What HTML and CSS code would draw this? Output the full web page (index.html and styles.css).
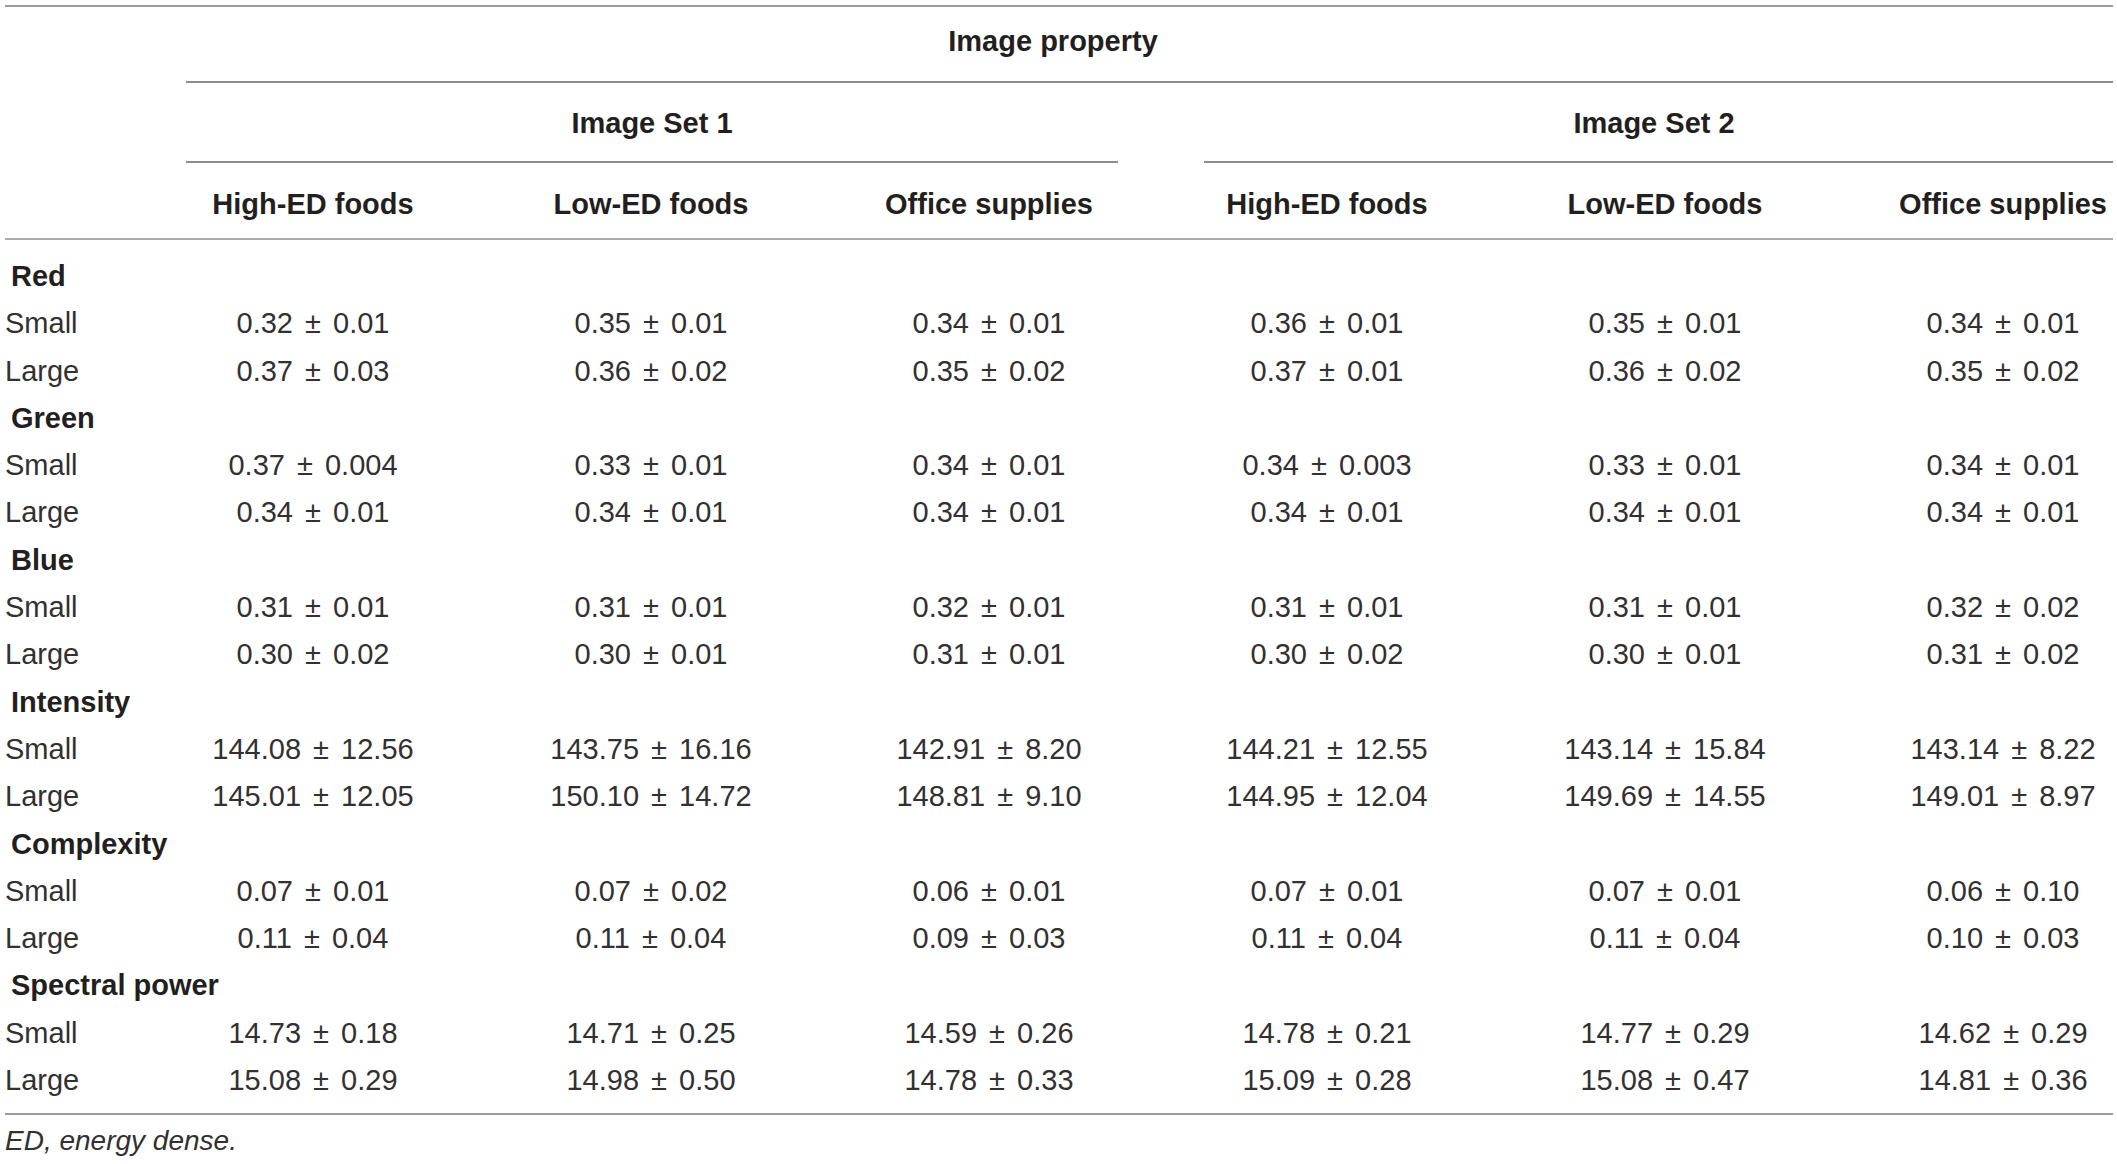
FILE: index.html
```html
<!DOCTYPE html>
<html lang="en">
<head>
<meta charset="UTF-8">
<meta name="viewport" content="width=device-width, initial-scale=1.0">
<title>Image property by image set</title>
<link rel="stylesheet" href="styles.css">
</head>
<body>
<div class="wrap">
<table class="props">
    <colgroup>
        <col class="col-label">
        <col class="col-val"><col class="col-val"><col class="col-val">
        <col class="col-val"><col class="col-val"><col class="col-val">
    </colgroup>
    <thead>
        <tr>
            <th class="stub" rowspan="3"></th>
            <th class="group" colspan="6"><div class="rule prop-title">Image property</div></th>
        </tr>
        <tr>
            <th class="group" colspan="3"><div class="rule set-one">Image Set 1</div></th>
            <th class="group" colspan="3"><div class="rule set-two">Image Set 2</div></th>
        </tr>
        <tr class="head-cols">
            <th>High-ED foods</th>
            <th>Low-ED foods</th>
            <th>Office supplies</th>
            <th>High-ED foods</th>
            <th>Low-ED foods</th>
            <th>Office supplies</th>
        </tr>
    </thead>
    <tbody>
        <tr><td class="cat" colspan="7">Red</td></tr>
        <tr><td class="lab">Small</td><td>0.32 ± 0.01</td><td>0.35 ± 0.01</td><td>0.34 ± 0.01</td><td>0.36 ± 0.01</td><td>0.35 ± 0.01</td><td>0.34 ± 0.01</td></tr>
        <tr><td class="lab">Large</td><td>0.37 ± 0.03</td><td>0.36 ± 0.02</td><td>0.35 ± 0.02</td><td>0.37 ± 0.01</td><td>0.36 ± 0.02</td><td>0.35 ± 0.02</td></tr>
        <tr><td class="cat" colspan="7">Green</td></tr>
        <tr><td class="lab">Small</td><td>0.37 ± 0.004</td><td>0.33 ± 0.01</td><td>0.34 ± 0.01</td><td>0.34 ± 0.003</td><td>0.33 ± 0.01</td><td>0.34 ± 0.01</td></tr>
        <tr><td class="lab">Large</td><td>0.34 ± 0.01</td><td>0.34 ± 0.01</td><td>0.34 ± 0.01</td><td>0.34 ± 0.01</td><td>0.34 ± 0.01</td><td>0.34 ± 0.01</td></tr>
        <tr><td class="cat" colspan="7">Blue</td></tr>
        <tr><td class="lab">Small</td><td>0.31 ± 0.01</td><td>0.31 ± 0.01</td><td>0.32 ± 0.01</td><td>0.31 ± 0.01</td><td>0.31 ± 0.01</td><td>0.32 ± 0.02</td></tr>
        <tr><td class="lab">Large</td><td>0.30 ± 0.02</td><td>0.30 ± 0.01</td><td>0.31 ± 0.01</td><td>0.30 ± 0.02</td><td>0.30 ± 0.01</td><td>0.31 ± 0.02</td></tr>
        <tr><td class="cat" colspan="7">Intensity</td></tr>
        <tr><td class="lab">Small</td><td>144.08 ± 12.56</td><td>143.75 ± 16.16</td><td>142.91 ± 8.20</td><td>144.21 ± 12.55</td><td>143.14 ± 15.84</td><td>143.14 ± 8.22</td></tr>
        <tr><td class="lab">Large</td><td>145.01 ± 12.05</td><td>150.10 ± 14.72</td><td>148.81 ± 9.10</td><td>144.95 ± 12.04</td><td>149.69 ± 14.55</td><td>149.01 ± 8.97</td></tr>
        <tr><td class="cat" colspan="7">Complexity</td></tr>
        <tr><td class="lab">Small</td><td>0.07 ± 0.01</td><td>0.07 ± 0.02</td><td>0.06 ± 0.01</td><td>0.07 ± 0.01</td><td>0.07 ± 0.01</td><td>0.06 ± 0.10</td></tr>
        <tr><td class="lab">Large</td><td>0.11 ± 0.04</td><td>0.11 ± 0.04</td><td>0.09 ± 0.03</td><td>0.11 ± 0.04</td><td>0.11 ± 0.04</td><td>0.10 ± 0.03</td></tr>
        <tr><td class="cat" colspan="7">Spectral power</td></tr>
        <tr><td class="lab">Small</td><td>14.73 ± 0.18</td><td>14.71 ± 0.25</td><td>14.59 ± 0.26</td><td>14.78 ± 0.21</td><td>14.77 ± 0.29</td><td>14.62 ± 0.29</td></tr>
        <tr><td class="lab">Large</td><td>15.08 ± 0.29</td><td>14.98 ± 0.50</td><td>14.78 ± 0.33</td><td>15.09 ± 0.28</td><td>15.08 ± 0.47</td><td>14.81 ± 0.36</td></tr>
    </tbody>
</table>
</div>
<p class="note">ED, energy dense.</p>
</body>
</html>
```
FILE: styles.css
```css
body {
    margin: 0;
    padding: 5px 0 0 5px;
    background-color: #ffffff;
    color: #231f20;
    font-family: "Liberation Sans", Arial, sans-serif;
    font-size: 29px;
}
.wrap {
    width: 2108px;
    overflow: hidden;
}
.props {
    width: 2167px;
    table-layout: fixed;
    border-collapse: collapse;
    border-top: 2px solid #9a9a9a;
    border-bottom: 2px solid #9a9a9a;
}
.col-label {
    width: 139px;
}
.col-val {
    width: 338px;
}
th {
    font-weight: bold;
    line-height: 37px;
    padding: 0;
    text-align: center;
}
.stub {
    border-bottom: 2px solid #ababab;
}
.rule {
    border-bottom: 2px solid #8c8c8c;
    margin: 0 40px 0 42px;
}
.prop-title {
    padding: 16px 212px 21px 0;
}
.set-one {
    padding: 22px 0 19px;
}
.set-two {
    padding: 22px 28px 19px 0;
    margin-left: 46px;
}
.head-cols th {
    padding: 23px 0 15px;
    border-bottom: 2px solid #ababab;
}
td {
    line-height: 33.3px;
    padding: 7px 0;
    text-align: center;
    white-space: nowrap;
    word-spacing: 4px;
    color: #333031;
}
td.lab {
    text-align: left;
    word-spacing: 0;
}
td.cat {
    text-align: left;
    padding-left: 6px;
    font-weight: bold;
    word-spacing: 0;
    color: #231f20;
}
tbody tr:first-child td {
    padding-top: 20px;
}
tbody tr:last-child td {
    padding-bottom: 16px;
}
.note {
    margin: 9px 0 0;
    font-size: 28px;
    font-style: italic;
    line-height: 33px;
    color: #333031;
}
```
